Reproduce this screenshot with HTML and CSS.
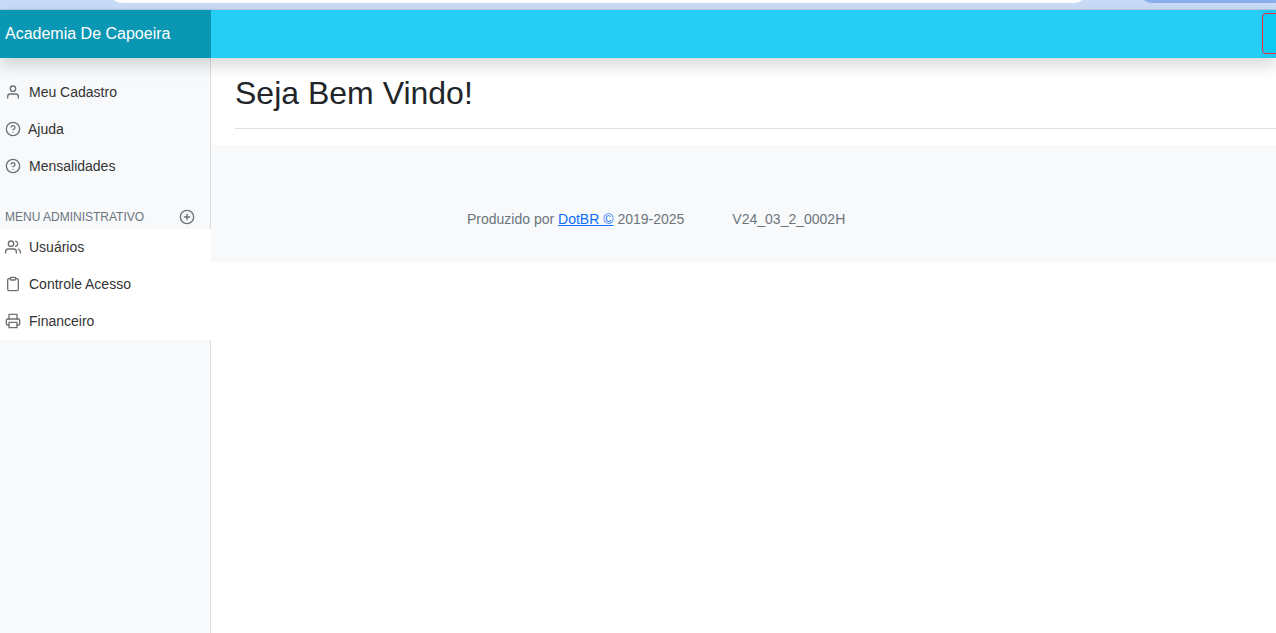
FILE: index.html
```html
<!DOCTYPE html>
<html lang="pt-BR">
<head>
<meta charset="utf-8">
<title>Academia De Capoeira</title>
<link rel="stylesheet" href="styles.css">
</head>
<body>
<div class="chrome">
  <div class="chrome-field"></div>
  <div class="chrome-button"></div>
</div>
<header class="navbar">
  <a class="brand" href="#">Academia De Capoeira</a>
  <div class="nav-fill"></div>
  <div class="nav-action"><div class="nav-input"></div></div>
</header>
<div class="layout">
  <aside class="sidebar">
    <ul class="menu menu-top">
      <li class="item">
        <svg class="icon" viewBox="0 0 24 24"><path d="M20 21v-2a4 4 0 0 0-4-4H8a4 4 0 0 0-4 4v2"/><circle cx="12" cy="7" r="4"/></svg>
        <span class="label">Meu Cadastro</span>
      </li>
      <li class="item item-tight">
        <svg class="icon" viewBox="0 0 24 24"><circle cx="12" cy="12" r="10"/><path d="M9.09 9a3 3 0 0 1 5.83 1c0 2-3 3-3 3"/><line x1="12" y1="17" x2="12.01" y2="17"/></svg>
        <span class="label">Ajuda</span>
      </li>
      <li class="item">
        <svg class="icon" viewBox="0 0 24 24"><circle cx="12" cy="12" r="10"/><path d="M9.09 9a3 3 0 0 1 5.83 1c0 2-3 3-3 3"/><line x1="12" y1="17" x2="12.01" y2="17"/></svg>
        <span class="label">Mensalidades</span>
      </li>
    </ul>
    <div class="section-head">
      <span class="section-title">MENU ADMINISTRATIVO</span>
      <svg class="icon icon-plus" viewBox="0 0 24 24"><circle cx="12" cy="12" r="10"/><line x1="12" y1="8" x2="12" y2="16"/><line x1="8" y1="12" x2="16" y2="12"/></svg>
    </div>
    <ul class="menu menu-admin">
      <li class="item">
        <svg class="icon icon-users" viewBox="0 0 24 24"><path d="M17 21v-2a4 4 0 0 0-4-4H5a4 4 0 0 0-4 4v2"/><circle cx="9" cy="7" r="4"/><path d="M23 21v-2a4 4 0 0 0-3-3.87"/><path d="M16 3.13a4 4 0 0 1 0 7.75"/></svg>
        <span class="label">Usuários</span>
      </li>
      <li class="item">
        <svg class="icon" viewBox="0 0 24 24"><path d="M16 4h2a2 2 0 0 1 2 2v14a2 2 0 0 1-2 2H6a2 2 0 0 1-2-2V6a2 2 0 0 1 2-2h2"/><rect x="8" y="2" width="8" height="4" rx="1" ry="1"/></svg>
        <span class="label">Controle Acesso</span>
      </li>
      <li class="item">
        <svg class="icon" viewBox="0 0 24 24"><polyline points="6 9 6 2 18 2 18 9"/><path d="M6 18H4a2 2 0 0 1-2-2v-5a2 2 0 0 1 2-2h16a2 2 0 0 1 2 2v5a2 2 0 0 1-2 2h-2"/><rect x="6" y="14" width="12" height="8"/></svg>
        <span class="label">Financeiro</span>
      </li>
    </ul>
  </aside>
  <main class="main">
    <section class="welcome">
      <h1 class="title">Seja Bem Vindo!</h1>
    </section>
    <footer class="footer">
      <span class="credit">Produzido por <a href="#">DotBR ©</a> 2019-2025</span>
      <span class="version">V24_03_2_0002H</span>
    </footer>
  </main>
</div>
</body>
</html>
```
FILE: styles.css
```css
* { box-sizing: border-box; }
html, body { margin: 0; height: 100%; overflow: hidden; }
body {
  display: flex;
  flex-direction: column;
  font-family: "Liberation Sans", Arial, sans-serif;
  font-size: 16px;
  color: #212529;
  background: #fff;
}
.chrome {
  position: relative;
  flex: 0 0 10px;
  height: 10px;
  background: #c9daf6;
  border-bottom: 1px solid #b5c5dc;
  overflow: hidden;
}
.chrome-field {
  position: absolute;
  left: 110px;
  top: -20px;
  width: 976px;
  height: 23px;
  background: #fff;
  border-radius: 12px;
}
.chrome-button {
  position: absolute;
  left: 1140px;
  top: -20px;
  width: 200px;
  height: 23px;
  background: #8aaeee;
  border-radius: 12px;
}
.navbar {
  position: relative;
  z-index: 2;
  flex: 0 0 48px;
  display: flex;
  background: #26cef5;
  box-shadow: 0 8px 16px rgba(0, 0, 0, .15);
}
.brand {
  flex: 0 0 211px;
  padding: 0 5px;
  font-size: 16px;
  line-height: 47px;
  color: #fff;
  text-decoration: none;
  background: #0a97b3;
}
.nav-fill { flex: 1; min-width: 0; }
.nav-action {
  flex: 0 0 15px;
  min-width: 0;
  overflow: hidden;
  padding: 3px 0 3px 1px;
  background: #1ec8ef;
}
.nav-input {
  width: 40px;
  height: 41px;
  background: #0dcaf0;
  border: 1px solid #f5293f;
  border-radius: 4px;
}
.layout { flex: 1; display: flex; min-height: 0; }
.sidebar {
  flex: 0 0 211px;
  padding-top: 15px;
  background: #f8f9fa;
  border-right: 1px solid #dcdddf;
}
.menu { list-style: none; margin: 0; padding: 0; }
.item {
  display: flex;
  align-items: center;
  height: 37px;
  padding-left: 5px;
  font-size: 14px;
  color: #333;
}
.menu-admin .item { padding-bottom: 2px; }
.icon {
  flex: none;
  width: 16px;
  height: 16px;
  fill: none;
  stroke: #6e7174;
  stroke-width: 2;
  stroke-linecap: round;
  stroke-linejoin: round;
}
.label { margin-left: 8px; }
.item-tight .label { margin-left: 7px; }
.section-head {
  display: flex;
  align-items: center;
  justify-content: space-between;
  height: 24px;
  margin-top: 21px;
  padding: 0 15px 0 5px;
}
.section-title { font-size: 12px; color: #6c757d; }
.menu-admin {
  width: 211px;
  margin-right: -1px;
  background: #fff;
}
.main { flex: 1; min-width: 0; }
.welcome { height: 87px; padding: 0 0 16px 24px; }
.title {
  height: 71px;
  margin: 0;
  padding-top: 16px;
  font-size: 32px;
  font-weight: 400;
  line-height: 38px;
  border-bottom: 1px solid #dee2e6;
}
.footer {
  display: flex;
  gap: 48px;
  height: 117px;
  padding: 65px 0 0 256px;
  font-size: 14px;
  line-height: 19px;
  color: #6c757d;
  background: #f8f9fa;
}
.footer a { color: #0d6efd; }
```
